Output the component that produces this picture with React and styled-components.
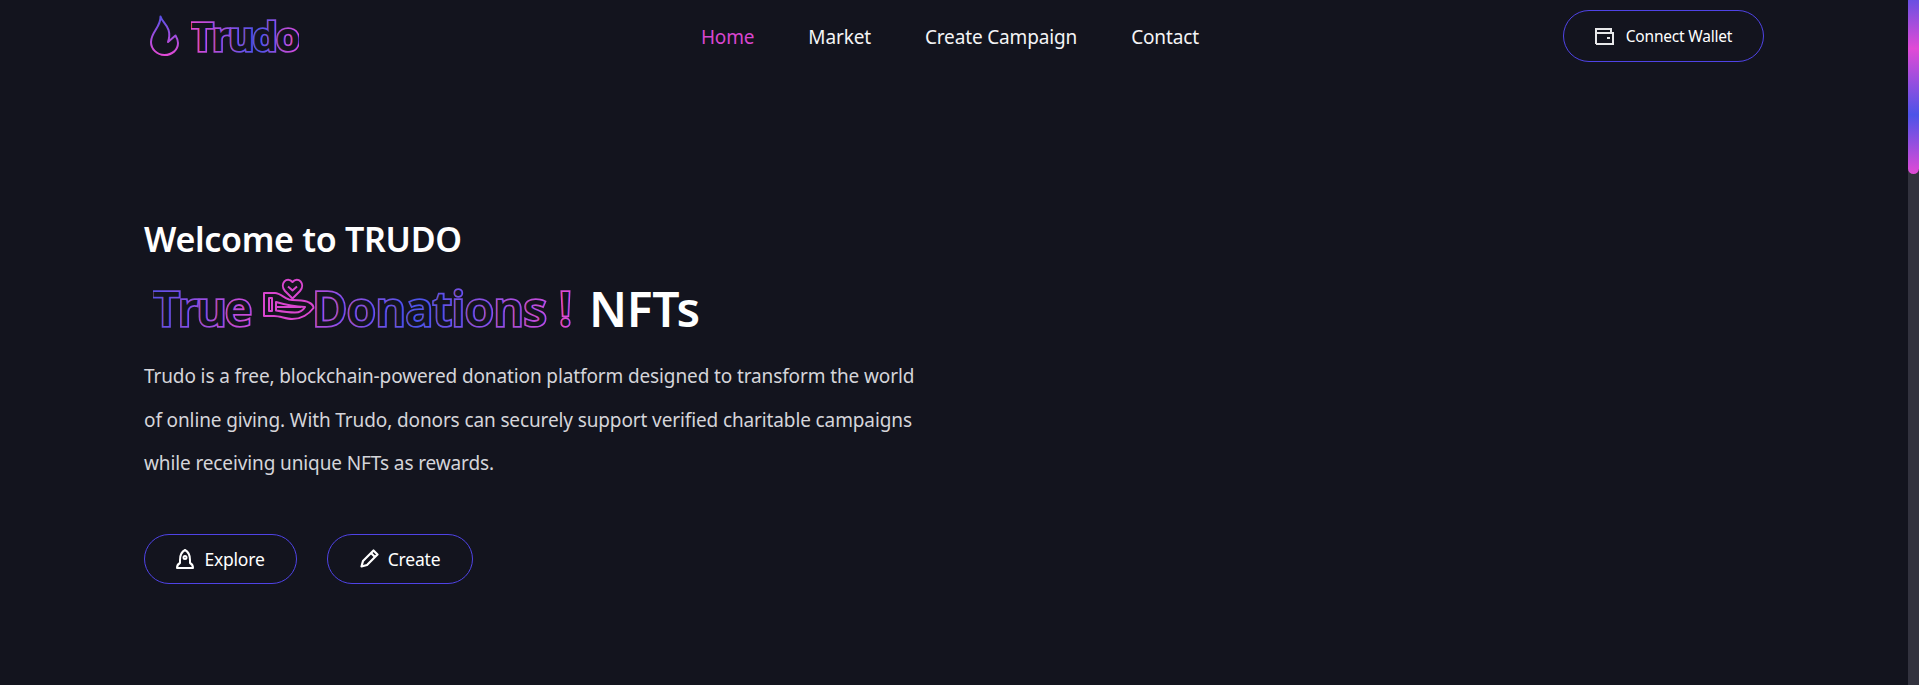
import styled, { createGlobalStyle } from 'styled-components';

const GlobalStyle = createGlobalStyle`
  html, body {
    margin: 0;
    height: 100%;
    overflow: hidden;
    background: #13141e;
  }
  * {
    box-sizing: border-box;
  }
`;

const gradient = 'linear-gradient(90deg, #5a50e6, #e14ad6 27%, #4c53e8 63%, #e14ad6)';

const Page = styled.div`
  height: 100vh;
  background: #13141e;
  color: #fff;
  font-family: 'Noto Sans', 'Open Sans', sans-serif;
  padding: 10px 155px 0 144px;
`;

const ScrollTrack = styled.div`
  position: fixed;
  top: 0;
  right: 0;
  bottom: 0;
  width: 11px;
  background: #32323e;
`;

const ScrollThumb = styled.div`
  height: 174px;
  border-radius: 0 0 6px 6px;
  background: linear-gradient(180deg, #6a50e2, #e14ad6 28%, #4c53e8 66%, #e14ad6);
`;

const Header = styled.header`
  display: flex;
  align-items: center;
  justify-content: space-between;
  height: 52px;
`;

const Logo = styled.a`
  display: flex;
  align-items: center;
  gap: 11px;
  margin-left: 5px;
`;

const OutlineText = styled.span`
  font-family: 'Open Sans', 'Noto Sans', sans-serif;
  font-weight: 700;
  color: #13141e;
  background: ${(p) => p.$bg};
  -webkit-background-clip: text;
  background-clip: text;
  -webkit-text-stroke: 3.6px transparent;
`;

const LogoText = styled(OutlineText)`
  font-size: 39px;
  line-height: 52px;
  letter-spacing: -1.4px;
`;

const Nav = styled.nav`
  display: flex;
  gap: 54px;
  margin: 2px 0 0 38px;
`;

const NavLink = styled.a`
  font-size: 19px;
  color: ${(p) => (p.$active ? '#d946cf' : '#f4f4f6')};
  letter-spacing: -0.15px;
`;

const PillButton = styled.button`
  display: inline-flex;
  align-items: center;
  justify-content: center;
  gap: ${(p) => p.$gap || 12}px;
  width: ${(p) => p.$width}px;
  height: ${(p) => p.$height}px;
  border: 1px solid #4f43e6;
  border-radius: 26px;
  background: transparent;
  color: #fff;
  font-family: inherit;
  font-size: ${(p) => p.$size || 17}px;
  letter-spacing: -0.2px;
  padding: 0;

  svg {
    flex: none;
  }
`;

const Hero = styled.section`
  margin-top: 152px;
  width: 800px;
`;

const Welcome = styled.h2`
  margin: 0;
  font-size: 34px;
  line-height: 50px;
  font-weight: 600;
  letter-spacing: -0.3px;
`;

const Title = styled.h1`
  margin: 13px 0 0 9px;
  display: flex;
  align-items: center;
  height: 62px;
  font-size: 48px;
  font-weight: 600;
  white-space: nowrap;
  letter-spacing: -0.3px;
`;

const TitleOutline = styled(OutlineText)`
  display: inline-flex;
  align-items: center;
  font-size: 47px;
  font-weight: 600;
  letter-spacing: 0.1px;
`;

const TightWord = styled.span`
  letter-spacing: -1.6px;
`;

const HandIcon = styled.svg`
  width: 60px;
  height: 55px;
  margin: -14px -7px 0 9px;
  flex: none;
`;

const Spaced = styled.span`
  margin-left: ${(p) => p.$left}px;
`;

const Lead = styled.p`
  margin: 16px 0 0;
  width: 785px;
  font-size: 19px;
  line-height: 43.5px;
  color: #d5d5da;
  letter-spacing: -0.12px;
`;

const Actions = styled.div`
  display: flex;
  gap: 30px;
  margin-top: 48px;
`;

function FlameIcon() {
  return (
    <svg width="31" height="42" viewBox="0 0 31 42" fill="none">
      <defs>
        <linearGradient id="flameStroke" x1="0" y1="0" x2="0" y2="1">
          <stop offset="0" stopColor="#5a50e6" />
          <stop offset="1" stopColor="#e14ad6" />
        </linearGradient>
      </defs>
      <path
        d="M11.5 1.5C13 8 24 12 19 27L26.5 20.5C28 23 29 25 29 28C29 35 23 40 15.5 40C8 40 2 34 2 27C2 17 12 12 11.5 1.5Z"
        stroke="url(#flameStroke)"
        strokeWidth="2"
        strokeLinejoin="round"
      />
    </svg>
  );
}

function WalletIcon() {
  return (
    <svg width="19" height="17" viewBox="0 0 19 17" fill="none" stroke="#e8e8ea" strokeWidth="2">
      <path d="M1 16V1H16V5" />
      <path d="M1 5H18V16H1" />
      <path d="M12 10h3" />
    </svg>
  );
}

function RocketIcon() {
  return (
    <svg width="18" height="22" viewBox="6 3 18 22" fill="none" stroke="#fff" strokeWidth="2" strokeLinejoin="round">
      <path d="M15 5C11 7 10 11 10 15V18C8 19 7 20.500 7 23H23C23 20.500 22 19 20 18V15C20 11 19 7 15 5Z" />
      <circle cx="15" cy="12.500" r="1.500" />
    </svg>
  );
}

function PencilIcon() {
  return (
    <svg width="19" height="19" viewBox="6 5 19 19" fill="none" stroke="#fff" strokeWidth="2.200" strokeLinejoin="round">
      <path d="M7.500 22.500L9 17L19.500 6.500L23.500 10.500L13 21Z" />
      <path d="M17 9L21 13" />
    </svg>
  );
}

function HandHeart() {
  return (
    <HandIcon viewBox="0 0 60 55" fill="none" stroke="#d946cf" strokeWidth="2" strokeLinejoin="round">
      <path d="M33.500 24.500L26 17C20 10 28 1.500 33.500 8C39 1.500 47 10 41 17Z" />
      <path d="M29 12.500L33.500 16.500L38 12.500" />
      <path d="M5 19H16C21 19 25 24 30 25.500C36 27 45 25.500 50 28.500C53 30 54.500 32 54.500 34C50 40 42 45 33 45C27 45 21 42 15 42H5Z" />
      <path d="M10 24H13V37H10Z" />
      <path d="M17 28C24 30 35 32.500 46 33C44 36.500 41 38.500 36 38.500C29 38.500 23 37.500 17 36.500Z" />
      <path d="M18 33H42" />
    </HandIcon>
  );
}

export default function App() {
  return (
    <Page>
      <GlobalStyle />
      <Header>
        <Logo>
          <FlameIcon />
          <LogoText $bg="linear-gradient(90deg, #e14ad6, #4c53e8 62%, #e14ad6)">Trudo</LogoText>
        </Logo>
        <Nav>
          <NavLink $active>Home</NavLink>
          <NavLink>Market</NavLink>
          <NavLink>Create Campaign</NavLink>
          <NavLink>Contact</NavLink>
        </Nav>
        <PillButton $width={201} $height={52} $size={15.5}>
          <WalletIcon />
          Connect Wallet
        </PillButton>
      </Header>
      <Hero>
        <Welcome>Welcome to TRUDO</Welcome>
        <Title>
          <TitleOutline $bg={gradient}>
            <TightWord>True</TightWord>
            <HandHeart />
            Donations !
          </TitleOutline>
          <Spaced $left={17}>NFTs</Spaced>
        </Title>
        <Lead>
          Trudo is a free, blockchain-powered donation platform designed to transform the world of online giving. With
          Trudo, donors can securely support verified charitable campaigns while receiving unique NFTs as rewards.
        </Lead>
        <Actions>
          <PillButton $width={153} $height={50} $size={17.5} $gap={10}>
            <RocketIcon />
            Explore
          </PillButton>
          <PillButton $width={146} $height={50} $size={17.5} $gap={9}>
            <PencilIcon />
            Create
          </PillButton>
        </Actions>
      </Hero>
      <ScrollTrack>
        <ScrollThumb />
      </ScrollTrack>
    </Page>
  );
}
